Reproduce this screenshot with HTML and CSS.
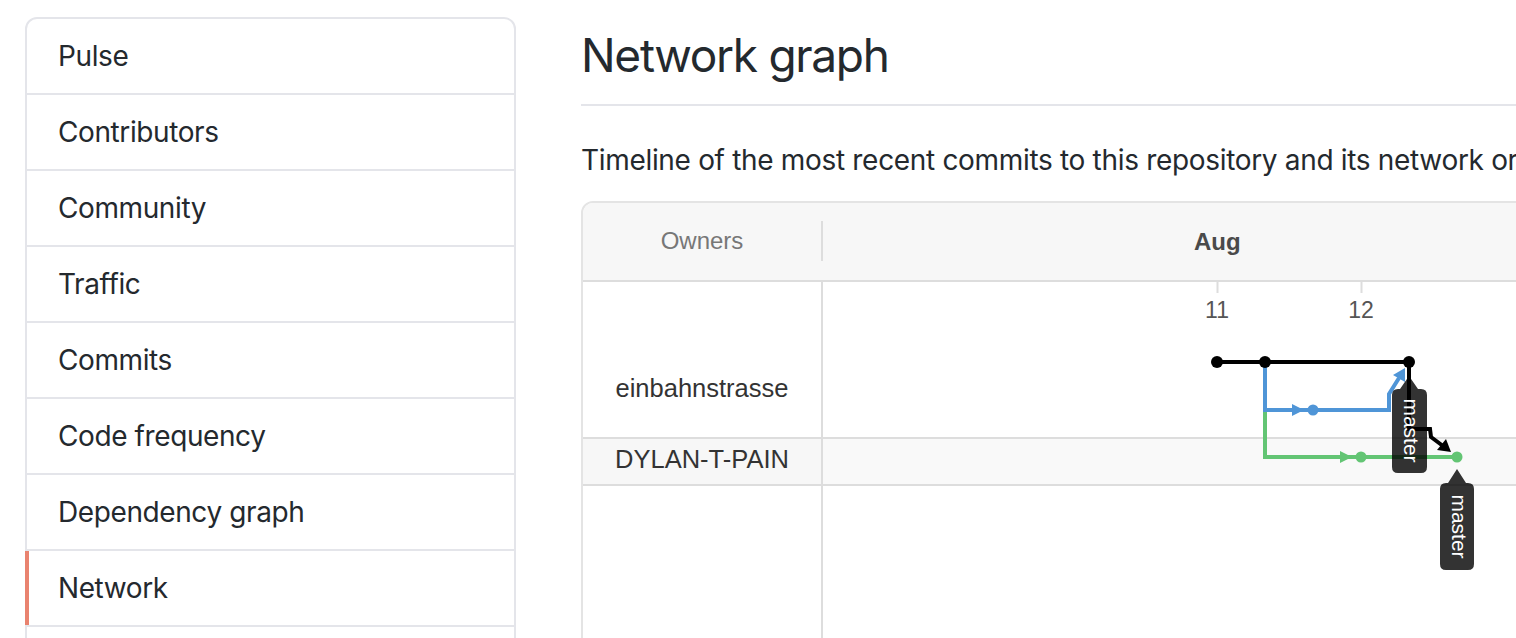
FILE: index.html
```html
<!DOCTYPE html>
<html lang="en">
<head>
<meta charset="utf-8">
<title>Network graph</title>
<link rel="stylesheet" href="styles.css">
</head>
<body>
<div class="page">
  <nav class="menu">
    <a class="menu-item" href="#">Pulse</a>
    <a class="menu-item" href="#">Contributors</a>
    <a class="menu-item" href="#">Community</a>
    <a class="menu-item" href="#">Traffic</a>
    <a class="menu-item" href="#">Commits</a>
    <a class="menu-item" href="#">Code frequency</a>
    <a class="menu-item" href="#">Dependency graph</a>
    <a class="menu-item selected" href="#">Network</a>
    <a class="menu-item" href="#">Forks</a>
  </nav>
  <main class="content">
    <h2 class="subhead">Network graph</h2>
    <p class="lead">Timeline of the most recent commits to this repository and its network ordered by most recently pushed to.</p>
    <div class="network">
      <div class="owners-head">Owners</div>
      <div class="graph-head"><span class="head-sep"></span><span class="month">Aug</span></div>
      <div class="owner owner-main">einbahnstrasse</div>
      <div class="graph-cell"></div>
      <div class="owner owner-alt">DYLAN-T-PAIN</div>
      <div class="graph-cell graph-alt"></div>
      <div class="owner"></div>
      <div class="graph-cell"></div>
      <svg class="graph-canvas" width="1100" height="440" viewBox="583 203 1100 440" xmlns="http://www.w3.org/2000/svg">
        <g stroke="#dddddd" stroke-width="2">
          <line x1="1217.5" y1="282" x2="1217.5" y2="293"/>
          <line x1="1361.5" y1="282" x2="1361.5" y2="293"/>
        </g>
        <g class="day">
          <text x="1217" y="318" text-anchor="middle">11</text>
          <text x="1361" y="318" text-anchor="middle">12</text>
        </g>
        <g fill="none" stroke-width="4">
          <path d="M1265 410 V457 H1457" stroke="#63c574"/>
          <path d="M1265 362 V410 H1389 V394 L1399 378" stroke="#4f95d7"/>
          <path d="M1217 362 H1409" stroke="#000"/>
          <path d="M1409 362 V429 H1430 L1431 437 L1443 446" stroke="#000"/>
        </g>
        <polygon points="1292,404 1304,410 1292,416" fill="#4f95d7"/>
        <polygon points="1405,368 1405,382 1393,375" fill="#4f95d7"/>
        <polygon points="1340,451 1352,457 1340,463" fill="#63c574"/>
        <polygon points="1451,452 1437,450 1446,439" fill="#000"/>
        <g fill="#000">
          <circle cx="1217" cy="362" r="6"/>
          <circle cx="1265" cy="362" r="6"/>
          <circle cx="1409" cy="362" r="6"/>
        </g>
        <circle cx="1313" cy="410" r="5.5" fill="#4f95d7"/>
        <circle cx="1361" cy="457" r="5.5" fill="#63c574"/>
        <circle cx="1457" cy="457" r="5.5" fill="#63c574"/>
        <g fill="rgba(0,0,0,0.8)">
          <path d="M1409 376 L1418 389 H1421 Q1427 389 1427 395 V467 Q1427 473 1421 473 H1398 Q1392 473 1392 467 V395 Q1392 389 1398 389 H1400 Z"/>
          <path d="M1457 469 L1466 483 H1468 Q1474 483 1474 489 V564 Q1474 570 1468 570 H1446 Q1440 570 1440 564 V489 Q1440 483 1446 483 H1448 Z"/>
        </g>
        <g class="tag">
          <text transform="translate(1403.5 430.5) rotate(90)" text-anchor="middle">master</text>
          <text transform="translate(1451.5 526.5) rotate(90)" text-anchor="middle">master</text>
        </g>
      </svg>
    </div>
  </main>
</div>
</body>
</html>
```

FILE: styles.css
```css
html, body {
  margin: 0;
  padding: 0;
  overflow: hidden;
  background: #ffffff;
}

body {
  font-family: Inter, "Noto Sans", "Liberation Sans", sans-serif;
  color: #24292e;
}

.page {
  display: flex;
  align-items: flex-start;
  gap: 65px;
  padding: 17px 0 0 25px;
  width: 1700px;
}

/* Sidebar menu */
.menu {
  flex: none;
  width: 491px;
  box-sizing: border-box;
  display: flex;
  flex-direction: column;
  border: 2px solid #e4e5ea;
  border-radius: 12px;
  background: #fff;
}

.menu-item {
  position: relative;
  display: block;
  padding: 16px 32px 16px 31px;
  font-size: 28px;
  line-height: 42px;
  letter-spacing: -0.4px;
  color: #24292e;
  text-decoration: none;
}

.menu-item + .menu-item {
  border-top: 2px solid #e4e5ea;
}

.menu-item.selected::before {
  content: "";
  position: absolute;
  left: -2px;
  top: 0;
  bottom: 0;
  width: 4px;
  background: #e9836f;
}

/* Main content */
.content {
  flex: none;
  width: 1100px;
}

.subhead {
  margin: 0;
  padding: 8px 0 19px;
  font-size: 46px;
  line-height: 60px;
  letter-spacing: -1.3px;
  font-weight: 400;
  color: #24292e;
  border-bottom: 2px solid #e4e5ea;
}

.lead {
  margin: 33px 0 0;
  font-size: 28px;
  line-height: 42px;
  letter-spacing: -0.32px;
  white-space: nowrap;
  color: #24292e;
}

/* Network graph box */
.network {
  position: relative;
  margin-top: 20px;
  display: grid;
  grid-template-columns: 238px 1fr;
  grid-template-rows: 79px 157px 47px 200px;
  border: 2px solid #e4e4e4;
  border-radius: 12px;
  overflow: hidden;
  font-family: "Liberation Sans", Arial, Helvetica, sans-serif;
}

.owners-head,
.graph-head {
  background: #f7f7f7;
  border-bottom: 2px solid #dddddd;
  box-sizing: border-box;
}

.owners-head {
  display: flex;
  align-items: center;
  justify-content: center;
  font-size: 24px;
  color: #777777;
  padding-bottom: 2px;
}

.graph-head {
  display: flex;
  align-items: center;
}

.head-sep {
  width: 2px;
  height: 40px;
  background: #dddddd;
  margin-bottom: 2px;
}

.month {
  margin-left: 371px;
  font-size: 24px;
  font-weight: 700;
  color: #4a4a4a;
}

.owner {
  box-sizing: border-box;
  border-bottom: 2px solid #dddddd;
  text-align: center;
  font-size: 25.5px;
  line-height: 30px;
  color: #333333;
}

.owner-main {
  padding-top: 91px;
}

.owner-alt {
  background: #f7f7f7;
  padding-top: 5px;
}

.graph-cell {
  box-sizing: border-box;
  border-left: 2px solid #dddddd;
  border-bottom: 2px solid #dddddd;
}

.graph-alt {
  background: #f9f9f9;
}

.graph-canvas {
  position: absolute;
  left: 0;
  top: 0;
  pointer-events: none;
}

.day {
  font-family: "Liberation Sans", Arial, Helvetica, sans-serif;
  font-size: 23px;
  fill: #555555;
}

.tag {
  font-family: "Liberation Sans", Arial, Helvetica, sans-serif;
  font-size: 21px;
  fill: #ffffff;
}
```
